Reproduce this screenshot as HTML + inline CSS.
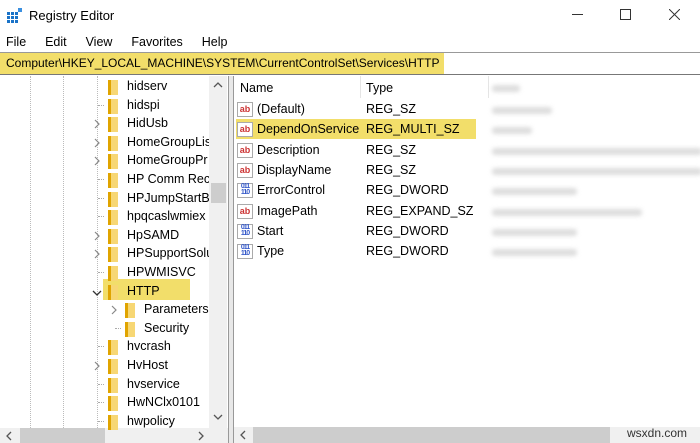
<!DOCTYPE html><html><head><style>
*{margin:0;padding:0;box-sizing:border-box}
body{width:700px;height:443px;background:#fff;font-family:"Liberation Sans",sans-serif;font-size:12.5px;color:#000;position:relative;overflow:hidden}
.a{position:absolute;white-space:nowrap}
.f{position:absolute;width:10px;height:15px;background:linear-gradient(90deg,#e0a400 0 3px,#f7d774 3px)}
.ch{position:absolute}
.ico{position:absolute;width:16px;height:15px;border:1px solid #aaa;background:#fff;font-size:9px;font-weight:bold;color:#c33;line-height:12px;text-align:center}
.ico.b{color:#3358c8;font-size:7px;line-height:6px;letter-spacing:-1px}
.blur{position:absolute;height:7px;background:#ddd;filter:blur(2px);border-radius:3px}
</style></head><body>
<svg class="a" style="left:7px;top:8px" width="16" height="16"><g fill="#1a73c8"><rect x="0" y="4" width="3" height="3"/><rect x="4" y="4" width="3" height="3"/><rect x="8" y="4" width="3" height="3"/><rect x="0" y="8" width="3" height="3"/><rect x="4" y="8" width="3" height="3"/><rect x="8" y="8" width="3" height="3"/><rect x="0" y="12" width="3" height="3"/><rect x="4" y="12" width="3" height="3"/><rect x="8" y="12" width="3" height="3"/><rect x="11" y="0" width="4" height="4" fill="#3a8fe0"/></g></svg>
<div class="a" style="left:29px;top:8px;font-size:13px">Registry Editor</div>
<div class="a" style="left:572px;top:14px;width:11px;height:1px;background:#333"></div>
<div class="a" style="left:620px;top:9px;width:11px;height:11px;border:1px solid #333"></div>
<svg class="a" style="left:669px;top:9px" width="11" height="11"><path d="M0 0L11 11M11 0L0 11" stroke="#333" stroke-width="1"/></svg>
<div class="a" style="left:6px;top:35px;font-size:12.5px;word-spacing:6px">File&nbsp; Edit&nbsp; View&nbsp; Favorites&nbsp; Help</div>
<div class="a" style="left:0;top:52px;width:700px;height:23px;border-top:1px solid #999;border-bottom:1px solid #777"></div>
<div class="a" style="left:0;top:53px;width:444px;height:21px;background:#f2de6a"></div>
<div class="a" style="left:6px;top:56px;font-size:12px">Computer\HKEY_LOCAL_MACHINE\SYSTEM\CurrentControlSet\Services\HTTP</div>
<div class="a" style="left:30px;top:76px;height:352px;border-left:1px dotted #bbb"></div>
<div class="a" style="left:63px;top:76px;height:352px;border-left:1px dotted #bbb"></div>
<div class="a" style="left:97px;top:76px;height:352px;border-left:1px dotted #bbb"></div>
<div class="a" style="left:103px;top:279px;width:87px;height:21px;background:#f2de6a"></div>
<div class="a" style="left:209px;top:76px;width:18px;height:352px;background:#f0f0f0"></div>
<div class="a" style="left:211px;top:183px;width:15px;height:20px;background:#cdcdcd"></div>
<svg class="a" style="left:213px;top:82px" width="10" height="6"><path d="M1 5L5 1L9 5" stroke="#555" fill="none" stroke-width="1.3"/></svg>
<svg class="a" style="left:213px;top:414px" width="10" height="6"><path d="M1 1L5 5L9 1" stroke="#555" fill="none" stroke-width="1.3"/></svg>
<div class="a" style="left:0;top:428px;width:228px;height:15px;background:#f0f0f0"></div>
<div class="a" style="left:20px;top:428px;width:85px;height:15px;background:#cdcdcd"></div>
<svg class="a" style="left:6px;top:431px" width="6" height="10"><path d="M5 1L1 5L5 9" stroke="#555" fill="none" stroke-width="1.3"/></svg>
<svg class="a" style="left:198px;top:431px" width="6" height="10"><path d="M1 1L5 5L1 9" stroke="#555" fill="none" stroke-width="1.3"/></svg>
<div class="a" style="left:228px;top:76px;width:6px;height:367px;background:#e8e8e8;border-left:1px solid #999;border-right:1px solid #999"></div>
<div id="tree"></div>
<div class="a" style="left:240px;top:81px">Name</div>
<div class="a" style="left:366px;top:81px">Type</div>
<div class="a" style="left:360px;top:76px;height:22px;border-left:1px solid #e5e5e5"></div>
<div class="a" style="left:488px;top:76px;height:22px;border-left:1px solid #e5e5e5"></div>
<div class="a" style="left:236px;top:119px;width:240px;height:20px;background:#f2de6a"></div>
<div id="rows"></div>
<div class="a" style="left:234px;top:427px;width:466px;height:16px;background:#f0f0f0"></div>
<div class="a" style="left:253px;top:427px;width:357px;height:16px;background:#cdcdcd"></div>
<svg class="a" style="left:240px;top:430px" width="6" height="10"><path d="M5 1L1 5L5 9" stroke="#555" fill="none" stroke-width="1.3"/></svg>
<div class="a" style="left:627px;top:426px;color:#333;font-size:12px">wsxdn.com</div>
<script>
var t=[["hidserv",0,0],["hidspi",0,1],["HidUsb",1,0],["HomeGroupLis",1,0],["HomeGroupPr",1,0],["HP Comm Rec",0,1],["HPJumpStartBr",0,1],["hpqcaslwmiex",0,1],["HpSAMD",1,0],["HPSupportSolu",1,0],["HPWMISVC",0,1],["HTTP",2,0],["Parameters",1,0,1],["Security",0,1,1],["hvcrash",0,1],["HvHost",1,0],["hvservice",0,1],["HwNClx0101",0,1],["hwpolicy",0,1]];
var h="";t.forEach(function(r,i){var y=78+i*18.6,o=r[3]?17:0;
if(r[1]==1)h+='<svg class="ch" style="left:'+(94+o)+'px;top:'+(y+4)+'px" width="6" height="10"><path d="M1 1L5 5L1 9" stroke="#888" fill="none" stroke-width="1.2"/></svg>';
if(r[1]==2)h+='<svg class="ch" style="left:92px;top:'+(y+7)+'px" width="10" height="6"><path d="M1 1L5 5L9 1" stroke="#333" fill="none" stroke-width="1.3"/></svg>';
if(r[2])h+='<div class="a" style="left:'+(98+o)+'px;top:'+(y+8)+'px;width:6px;border-top:1px dotted #aaa"></div>';
h+='<div class="f" style="left:'+(108+o)+'px;top:'+(y+2)+'px"></div><div class="a" style="left:'+(127+o)+'px;top:'+(y+1)+'px;width:'+(82-o)+'px;overflow:hidden">'+r[0]+'</div>';});
document.getElementById("tree").innerHTML=h;
var R=[["(Default)","REG_SZ",0,60],["DependOnService","REG_MULTI_SZ",0,40],["Description","REG_SZ",0,210],["DisplayName","REG_SZ",0,210],["ErrorControl","REG_DWORD",1,85],["ImagePath","REG_EXPAND_SZ",0,150],["Start","REG_DWORD",1,85],["Type","REG_DWORD",1,85]];
h="";R.forEach(function(r,i){var y=101+i*20.3;
h+=r[2]?'<div class="ico b" style="left:237px;top:'+(y+1)+'px">011<br>110</div>':'<div class="ico" style="left:237px;top:'+(y+1)+'px">ab</div>';
h+='<div class="a" style="left:257px;top:'+(y+1)+'px">'+r[0]+'</div><div class="a" style="left:366px;top:'+(y+1)+'px">'+r[1]+'</div><div class="blur" style="left:492px;top:'+(y+6)+'px;width:'+r[3]+'px"></div>';});
h+='<div class="blur" style="left:492px;top:85px;width:28px"></div>';
document.getElementById("rows").innerHTML=h;
</script>
</body></html>
